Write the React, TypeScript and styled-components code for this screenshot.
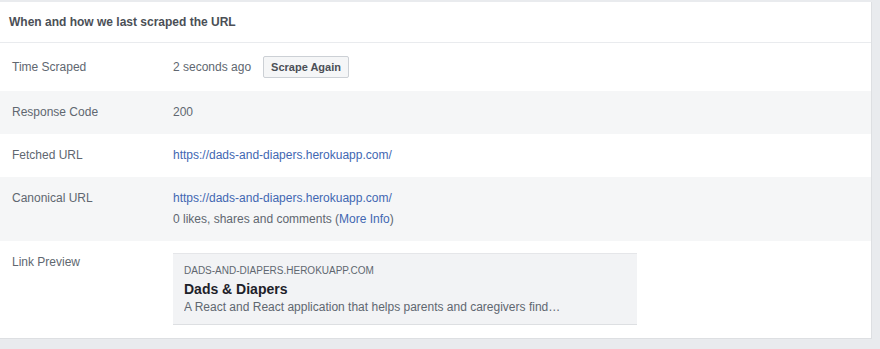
import styled, { createGlobalStyle } from "styled-components";

const GlobalStyle = createGlobalStyle`
  html, body {
    margin: 0;
    padding: 0;
    background: #e9ebee;
    font-family: "Liberation Sans", Arial, Helvetica, sans-serif;
  }
`;

const App = () => {
  return (
    <>
      <GlobalStyle />
      <Page>
        <Card>
          <Header>When and how we last scraped the URL</Header>
          <Row $centered>
            <Label>Time Scraped</Label>
            <Value>
              <Inline>
                <span>2 seconds ago</span>
                <Button type="button">Scrape Again</Button>
              </Inline>
            </Value>
          </Row>
          <Row $shaded>
            <Label>Response Code</Label>
            <Value>200</Value>
          </Row>
          <Row>
            <Label>Fetched URL</Label>
            <Value>
              <Link href="#">https://dads-and-diapers.herokuapp.com/</Link>
            </Value>
          </Row>
          <Row $shaded>
            <Label>Canonical URL</Label>
            <Value>
              <Line>
                <Link href="#">https://dads-and-diapers.herokuapp.com/</Link>
              </Line>
              <Line>
                0 likes, shares and comments (<Link href="#">More Info</Link>)
              </Line>
            </Value>
          </Row>
          <PreviewRow>
            <Label>Link Preview</Label>
            <Value>
              <Preview>
                <Domain>DADS-AND-DIAPERS.HEROKUAPP.COM</Domain>
                <Title>Dads &amp; Diapers</Title>
                <Description>
                  A React and React application that helps parents and caregivers find…
                </Description>
              </Preview>
            </Value>
          </PreviewRow>
        </Card>
      </Page>
    </>
  );
};

export default App;

const Page = styled.div`
  padding-top: 2px;
  width: 872px;
`;

const Card = styled.div`
  background: #fff;
  border-right: 1px solid #dddfe2;
  border-bottom: 1px solid #dddfe2;
  padding-bottom: 13px;
`;

const Header = styled.div`
  height: 41px;
  line-height: 40px;
  padding-left: 9px;
  font-size: 12px;
  font-weight: bold;
  color: #4b4f56;
  border-bottom: 1px solid #e9ebee;
  box-sizing: border-box;
`;

const Row = styled.div<{ $shaded?: boolean; $centered?: boolean }>`
  display: flex;
  align-items: ${({ $centered }) => ($centered ? "center" : "flex-start")};
  padding: 11px 0;
  font-size: 12px;
  line-height: 21px;
  background: ${({ $shaded }) => ($shaded ? "#f5f6f7" : "#fff")};
`;

const PreviewRow = styled(Row)`
  padding: 11px 0 0;
`;

const Label = styled.div`
  width: 161px;
  padding-left: 12px;
  flex-shrink: 0;
  color: #606770;
`;

const Value = styled.div`
  flex: 1;
  color: #606770;
`;

const Inline = styled.div`
  display: flex;
  align-items: center;
  gap: 12px;
  height: 26px;
`;

const Line = styled.div``;

const Link = styled.a`
  color: #4267b2;
  text-decoration: none;
`;

const Button = styled.button`
  height: 22px;
  padding: 0 7px;
  white-space: nowrap;
  font-family: inherit;
  font-size: 11px;
  font-weight: bold;
  color: #4b4f56;
  background: #f5f6f7;
  border: 1px solid #ccd0d5;
  border-radius: 2px;
  cursor: pointer;
`;

const Preview = styled.div`
  width: 464px;
  margin-top: 1px;
  box-sizing: border-box;
  height: 72px;
  padding: 10px 11px 0;
  background: #f2f3f5;
  border-top: 1px solid #e5e6e9;
  border-bottom: 1px solid #dddfe2;
`;

const Domain = styled.div`
  font-size: 10px;
  line-height: 14px;
  color: #606770;
  text-transform: uppercase;
`;

const Title = styled.div`
  margin-top: 2px;
  font-size: 14px;
  line-height: 19px;
  font-weight: bold;
  color: #1d2129;
`;

const Description = styled.div`
  font-size: 12px;
  line-height: 16px;
  color: #606770;
  white-space: nowrap;
  overflow: hidden;
  text-overflow: ellipsis;
`;
